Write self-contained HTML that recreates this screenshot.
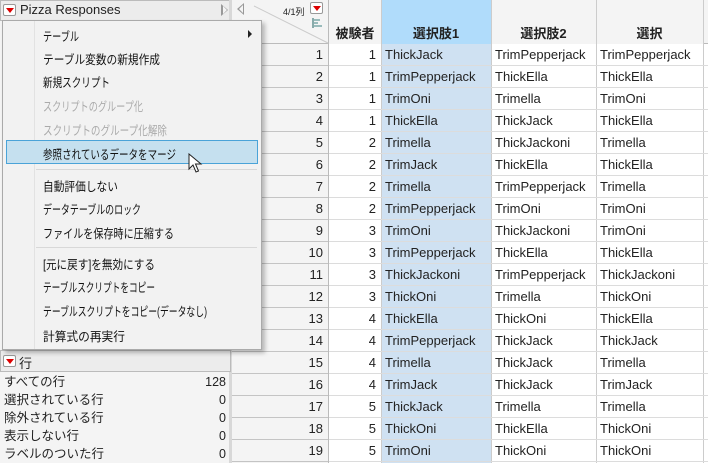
<!DOCTYPE html>
<html><head><meta charset="utf-8"><style>
*{margin:0;padding:0;box-sizing:border-box}
body{width:708px;height:463px;overflow:hidden;background:#fff;font-family:"Liberation Sans","Noto Sans CJK JP",sans-serif;font-size:13px;color:#222;position:relative}
.a{position:absolute}
.tri{position:absolute;width:13px;height:12px;border:1px solid #999;background:#fff;border-radius:2px}
.tri:after{content:"";position:absolute;left:2px;top:3px;border-left:4px solid transparent;border-right:4px solid transparent;border-top:5px solid #d00}
.row{position:absolute;left:232px;height:22px;width:476px}
.c{position:absolute;top:0;height:22px;line-height:22px;white-space:nowrap}
.mi{position:absolute;left:43px;font-size:12.5px;color:#111;white-space:nowrap;transform-origin:0 50%}
.dis{color:#aaa}
</style></head><body>
<!-- left panel -->
<div class="a" style="left:0;top:0;width:232px;height:463px;background:#f4f4f4"></div>
<div class="a" style="left:0;top:0;width:231px;height:21px;background:#ececec;border:1px solid #bbb"></div>
<div class="tri" style="left:3px;top:4px"></div>
<div class="a" style="left:20px;top:2px;font-size:13px">Pizza Responses</div>
<div class="a" style="left:221px;top:4px;width:0;height:0;border-top:6px solid transparent;border-bottom:6px solid transparent;border-left:7px solid #999"></div>
<div class="a" style="left:223px;top:6px;width:0;height:0;border-top:4px solid transparent;border-bottom:4px solid transparent;border-left:4px solid #f4f4f4"></div>
<div class="a" style="left:229px;top:0;width:3px;height:463px;background:#d8d8d8"></div>
<div class="a" style="left:0;top:350px;width:231px;height:22px;background:#ececec;border:1px solid #bbb"></div>
<div class="tri" style="left:3px;top:355px"></div>
<div class="a" style="left:19px;top:353px">行</div>
<div class="a" style="left:4px;top:373px;width:222px;line-height:18px;font-size:12.5px">
<div>すべての行<span style="float:right">128</span></div>
<div>選択されている行<span style="float:right">0</span></div>
<div>除外されている行<span style="float:right">0</span></div>
<div>表示しない行<span style="float:right">0</span></div>
<div>ラベルのついた行<span style="float:right">0</span></div>
</div>
<!-- table header -->
<div class="a" style="left:232px;top:0;width:476px;height:44px;background:#f4f4f4;border-bottom:1px solid #bbb"></div>
<div class="a" style="left:237px;top:3px;width:0;height:0;border-top:6px solid transparent;border-bottom:6px solid transparent;border-right:7px solid #999"></div>
<div class="a" style="left:239px;top:5px;width:0;height:0;border-top:4px solid transparent;border-bottom:4px solid transparent;border-right:4px solid #f4f4f4"></div>
<svg class="a" style="left:232px;top:0" width="97" height="44"><line x1="22" y1="6" x2="96" y2="43" stroke="#ccc"/><rect x="80" y="18" width="2" height="10" fill="#8aa"/><rect x="82" y="19" width="6" height="2" fill="#9bb"/><rect x="82" y="22" width="4" height="2" fill="#9bb"/><rect x="82" y="25" width="8" height="2" fill="#9bb"/></svg>
<div class="a" style="left:283px;top:5px;font-size:9px">4/1列</div>
<div class="tri" style="left:310px;top:2px"></div>
<div class="a" style="left:328px;top:0;width:1px;height:463px;background:#bbb"></div>
<div class="a" style="left:381px;top:0;width:110px;height:44px;background:#b0dcfb"></div>
<div class="a" style="left:381px;top:44px;width:110px;height:419px;background:#cfe1f2"></div>
<div class="a" style="left:381px;top:0;width:1px;height:463px;background:#ccc"></div>
<div class="a" style="left:491px;top:0;width:1px;height:463px;background:#ccc"></div>
<div class="a" style="left:596px;top:0;width:1px;height:463px;background:#ccc"></div>
<div class="a" style="left:703px;top:0;width:1px;height:463px;background:#ccc"></div>
<div class="a" style="left:329px;top:0;width:52px;height:44px;background:#f4f4f4"></div>
<div class="a" style="left:492px;top:0;width:104px;height:44px;background:#f4f4f4"></div>
<div class="a" style="left:597px;top:0;width:106px;height:44px;background:#f4f4f4"></div>
<div class="a" style="left:329px;top:23px;width:52px;text-align:center;font-weight:bold">被験者</div>
<div class="a" style="left:381px;top:23px;width:110px;text-align:center;font-weight:bold">選択肢1</div>
<div class="a" style="left:491px;top:23px;width:105px;text-align:center;font-weight:bold">選択肢2</div>
<div class="a" style="left:596px;top:23px;width:107px;text-align:center;font-weight:bold">選択</div>
<div class="a" style="left:232px;top:44px;width:96px;height:419px;background:#f4f4f4"></div>
<div id="rows"></div>
<!-- menu -->
<div class="a" style="left:5px;top:23px;width:260px;height:330px;background:rgba(0,0,0,0.25);filter:blur(2px)"></div>
<div class="a" style="left:2px;top:20px;width:260px;height:330px;background:#f2f2f2;border:1px solid #aaa"></div>
<div class="a" style="left:34px;top:21px;width:1px;height:328px;background:#e2e2e2"></div>
<div class="a" style="left:6px;top:140px;width:252px;height:24px;background:#c5e0ef;border:1px solid #4aa3d8"></div>
<div class="a" style="left:36px;top:169px;width:221px;height:1px;background:#d8d8d8"></div>
<div class="a" style="left:36px;top:247px;width:221px;height:1px;background:#d8d8d8"></div>
<div class="a" style="left:248px;top:30px;width:0;height:0;border-top:4px solid transparent;border-bottom:4px solid transparent;border-left:4px solid #222"></div>
<div class="mi" data-w="36" style="top:26px">テーブル</div>
<div class="mi" data-w="117" style="top:49px">テーブル変数の新規作成</div>
<div class="mi" data-w="67" style="top:72px">新規スクリプト</div>
<div class="mi dis" data-w="100" style="top:96px">スクリプトのグループ化</div>
<div class="mi dis" data-w="124" style="top:120px">スクリプトのグループ化解除</div>
<div class="mi" data-w="133" style="top:144px">参照されているデータをマージ</div>
<div class="mi" data-w="75" style="top:176px">自動評価しない</div>
<div class="mi" data-w="98" style="top:199px">データテーブルのロック</div>
<div class="mi" data-w="131" style="top:223px">ファイルを保存時に圧縮する</div>
<div class="mi" data-w="112" style="top:254px">[元に戻す]を無効にする</div>
<div class="mi" data-w="112" style="top:277px">テーブルスクリプトをコピー</div>
<div class="mi" data-w="164" style="top:301px">テーブルスクリプトをコピー(データなし)</div>
<div class="mi" data-w="82" style="top:326px">計算式の再実行</div>
<svg class="a" style="left:188px;top:153px" width="16" height="22"><path d="M1 1 L1 16 L5 12 L8 19 L10.5 18 L7.5 11 L13 11 Z" fill="#fff" stroke="#222" stroke-width="1"/></svg>
<script>
var d=[[1,"ThickJack","TrimPepperjack","TrimPepperjack"],[1,"TrimPepperjack","ThickElla","ThickElla"],[1,"TrimOni","Trimella","TrimOni"],[1,"ThickElla","ThickJack","ThickElla"],[2,"Trimella","ThickJackoni","Trimella"],[2,"TrimJack","ThickElla","ThickElla"],[2,"Trimella","TrimPepperjack","Trimella"],[2,"TrimPepperjack","TrimOni","TrimOni"],[3,"TrimOni","ThickJackoni","TrimOni"],[3,"TrimPepperjack","ThickElla","ThickElla"],[3,"ThickJackoni","TrimPepperjack","ThickJackoni"],[3,"ThickOni","Trimella","ThickOni"],[4,"ThickElla","ThickOni","ThickElla"],[4,"TrimPepperjack","ThickJack","ThickJack"],[4,"Trimella","ThickJack","Trimella"],[4,"TrimJack","ThickJack","TrimJack"],[5,"ThickJack","Trimella","Trimella"],[5,"ThickOni","ThickElla","ThickOni"],[5,"TrimOni","ThickOni","ThickOni"]];
var h="";
d.forEach(function(r,i){var t=44+22*i;
h+='<div class="row" style="top:'+t+'px"><div class="a" style="left:0;top:21px;width:96px;height:1px;background:#c4c4c4"></div><div class="a" style="left:97px;top:21px;width:379px;height:1px;background:#dcdcdc"></div>'+
'<div class="c" style="left:0;width:91px;text-align:right">'+(i+1)+'</div>'+
'<div class="c" style="left:97px;width:47px;text-align:right">'+r[0]+'</div>'+
'<div class="c" style="left:153px">'+r[1]+'</div><div class="c" style="left:263px">'+r[2]+'</div><div class="c" style="left:368px">'+r[3]+'</div></div>';});
document.getElementById("rows").innerHTML=h;
document.querySelectorAll('.mi').forEach(function(e){var w=e.getBoundingClientRect().width,t=+e.getAttribute('data-w');if(w>0&&t)e.style.transform='scaleX('+Math.min(1,t/w)+')';});
</script>
</body></html>
